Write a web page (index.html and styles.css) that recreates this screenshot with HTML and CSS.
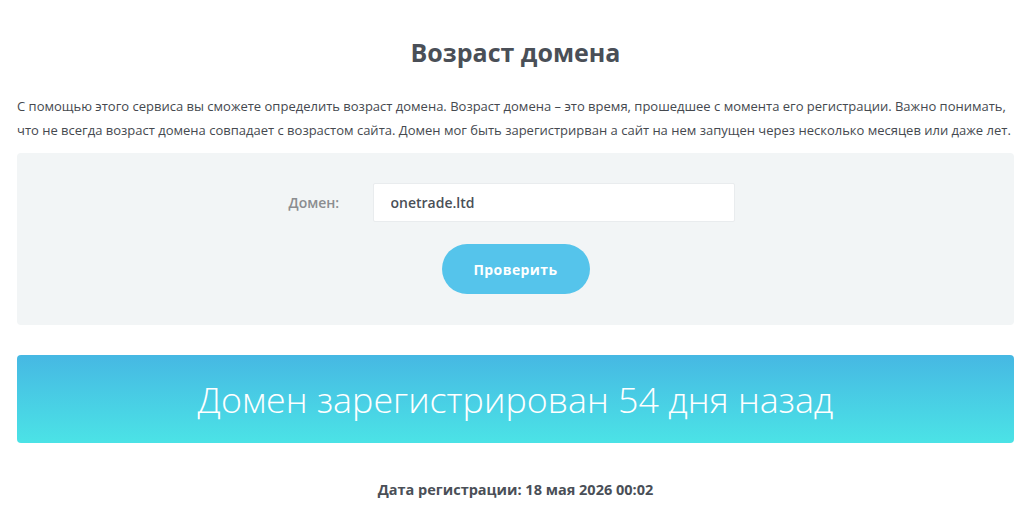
FILE: index.html
```html
<!doctype html>
<html>
<head>
<meta charset="utf-8">
<title>Возраст домена</title>
<link rel="stylesheet" href="styles.css">
</head>
<body>
	<div class="page">
		<h1 class="title">Возраст домена</h1>

		<p class="intro">С помощью этого сервиса вы сможете определить возраст домена. Возраст домена – это время, прошедшее с момента его регистрации. Важно понимать, что не всегда возраст домена совпадает с возрастом сайта. Домен мог быть зарегистрирван а сайт на нем запущен через несколько месяцев или даже лет.</p>

		<form class="check-form" onsubmit="return false">
			<div class="form-row">
				<label for="domain" class="form-label">Домен:</label>
				<input id="domain" class="form-input" value="onetrade.ltd">
			</div>
			<button type="submit" class="btn">Проверить</button>
		</form>

		<div class="result">Домен зарегистрирован 54 дня назад</div>

		<div class="reg-date">Дата регистрации: 18 мая 2026 00:02</div>
	</div>
</body>
</html>
```

FILE: styles.css
```css
html, body {
	margin: 0;
	background: #fff;
	color: #4a4f57;
	font-family: "Open Sans", "Noto Sans", sans-serif;
}

.page {
	padding: 0 17px;
}

.title {
	margin: 0;
	padding-top: 37px;
	text-align: center;
	font-size: 25px;
	line-height: 30px;
	font-weight: 700;
	color: #4a4f57;
}

.intro {
	margin: 27px 0 0;
	font-size: 13px;
	line-height: 24px;
	color: #45494f;
}

.check-form {
	margin-top: 11px;
	padding: 30px 0 31px;
	background: #f2f5f6;
	border-radius: 4px;
	display: flex;
	flex-direction: column;
	align-items: center;
}

.form-row {
	display: flex;
	align-items: center;
	padding-right: 8px;
}

.form-label {
	width: 51px;
	margin-right: 33px;
	font-size: 14px;
	font-weight: 600;
	color: #8b8d90;
	white-space: nowrap;
}

.form-input {
	box-sizing: border-box;
	width: 362px;
	height: 39px;
	padding: 0 17px;
	border: 1px solid #e9ecee;
	border-radius: 2px;
	background: #fff;
	font-family: inherit;
	font-size: 14px;
	font-weight: 600;
	color: #4a4f57;
	outline: none;
}

.btn {
	margin-top: 22px;
	width: 148px;
	height: 50px;
	border: 0;
	border-radius: 25px;
	background: #55c4eb;
	color: #fff;
	font-family: inherit;
	font-size: 14px;
	font-weight: 700;
	letter-spacing: 0.4px;
	cursor: pointer;
}

.result {
	margin-top: 30px;
	height: 88px;
	border-radius: 4px;
	background: linear-gradient(to bottom, #46b8e3, #4be3e6);
	color: #fff;
	font-size: 35.8px;
	font-weight: 300;
	line-height: 88px;
	text-align: center;
}

.reg-date {
	margin-top: 37px;
	text-align: center;
	font-size: 14.5px;
	font-weight: 700;
	color: #4a4f57;
}
```
